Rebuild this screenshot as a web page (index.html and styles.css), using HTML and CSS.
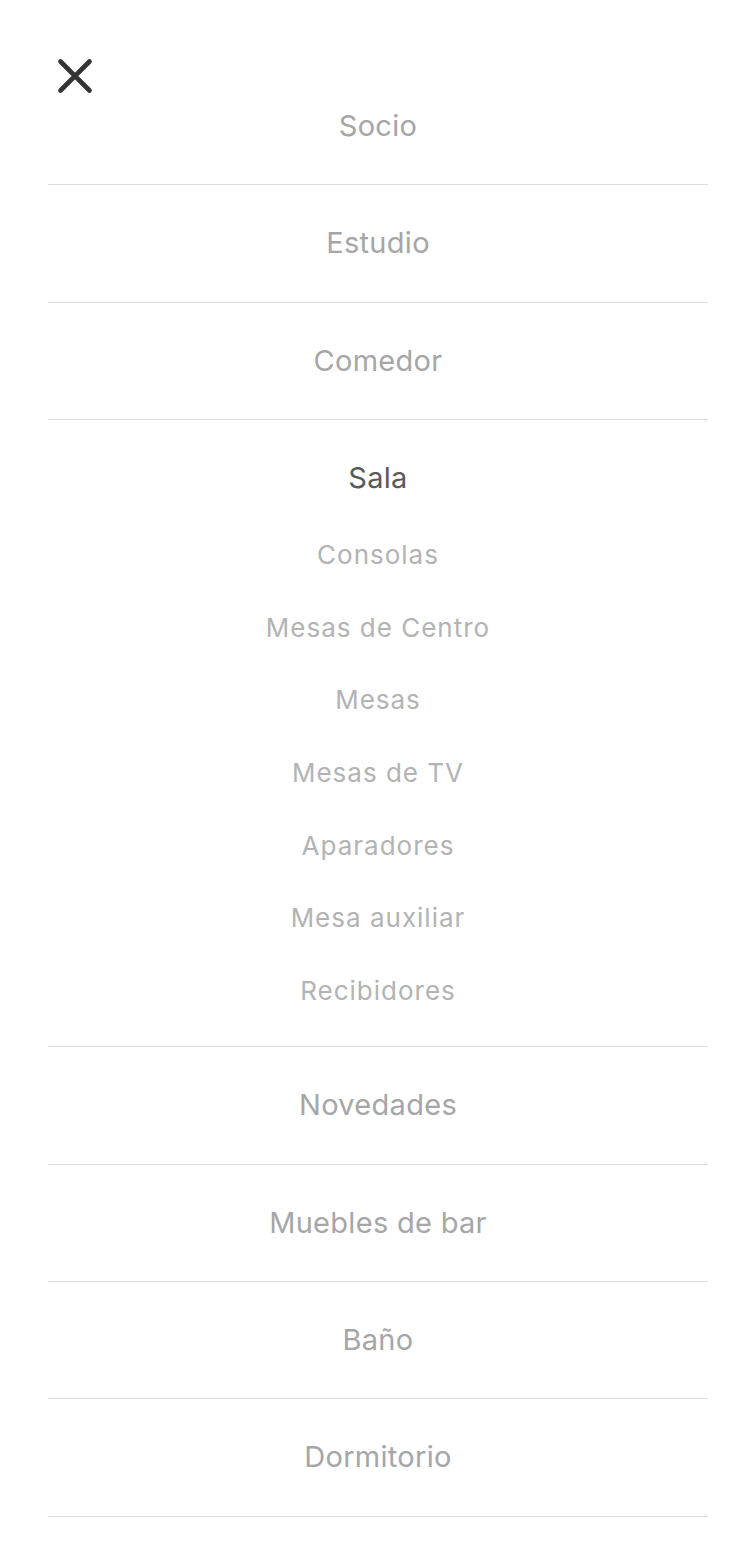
FILE: index.html
```html
<!DOCTYPE html>
<html lang="es">
<head>
<meta charset="utf-8">
<title>Menú</title>
<link rel="stylesheet" href="styles.css">
</head>
<body>
<div class="drawer">
  <button class="close" aria-label="Cerrar">
    <svg width="40" height="40" viewBox="0 0 40 40"><path d="M5.5 5.5 L34.5 34.5 M34.5 5.5 L5.5 34.5" stroke="#333" stroke-width="4.6" stroke-linecap="round" fill="none"/></svg>
  </button>
  <ul class="menu">
    <li class="row"><span class="title">Socio</span></li>
    <li class="row"><span class="title">Estudio</span></li>
    <li class="row"><span class="title">Comedor</span></li>
    <li class="row open">
      <span class="title">Sala</span>
      <ul class="sub">
        <li>Consolas</li>
        <li>Mesas de Centro</li>
        <li>Mesas</li>
        <li>Mesas de TV</li>
        <li>Aparadores</li>
        <li>Mesa auxiliar</li>
        <li>Recibidores</li>
      </ul>
    </li>
    <li class="row"><span class="title">Novedades</span></li>
    <li class="row"><span class="title">Muebles de bar</span></li>
    <li class="row"><span class="title">Baño</span></li>
    <li class="row"><span class="title">Dormitorio</span></li>
  </ul>
</div>
</body>
</html>
```

FILE: styles.css
```css
html, body {
  margin: 0;
  padding: 0;
  background: #fff;
}
body {
  font-family: Inter, "Liberation Sans", Arial, sans-serif;
}
.drawer {
  position: relative;
  padding: 68px 0 0 48px;
  width: 660px;
}
.close {
  position: absolute;
  left: 55px;
  top: 56px;
  width: 40px;
  height: 40px;
  padding: 0;
  border: 0;
  background: none;
}
.close svg { display: block; }
.menu {
  list-style: none;
  margin: 0;
  padding: 0;
}
.row {
  border-bottom: 1px solid #dcdcdc;
  padding: 40px 0;
  text-align: center;
}
.title {
  display: block;
  font-size: 29px;
  line-height: 36.33px;
  letter-spacing: 0.3px;
  color: #a6a6a6;
}
.open {
  padding-bottom: 18.67px;
}
.open .title {
  color: #5a5a5a;
}
.sub {
  list-style: none;
  margin: 22.67px 0 0;
  padding: 0;
}
.sub li {
  font-size: 26px;
  line-height: 72.67px;
  letter-spacing: 1px;
  color: #b3b3b3;
}
```
